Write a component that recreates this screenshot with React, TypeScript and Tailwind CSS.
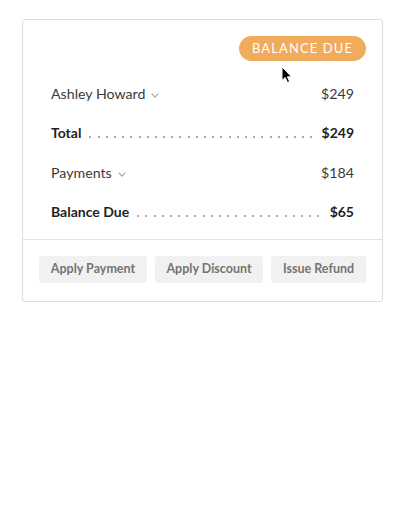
import React from "react";

const Chevron = () => (
  <svg width="8" height="5" viewBox="0 0 8 5" className="ml-[6px] mt-[2px]">
    <path d="M0.7 0.7 L4 4.1 L7.3 0.7" fill="none" stroke="#a0a0a0" strokeWidth="1.1" />
  </svg>
);

const Dots = () => (
  <div className="flex-1 ml-[8px] mr-[6px] self-end mb-[5px] h-[2px] overflow-hidden flex gap-[6.2px]">
    {Array.from({ length: 40 }).map((_, i) => (
      <div key={i} className="shrink-0 w-[2px] h-[2px] bg-[#aaaaaa]" />
    ))}
  </div>
);

export default function App() {
  return (
    <div className="w-[404px] h-[524px] bg-white relative" style={{ fontFamily: "Lato, 'Noto Sans', sans-serif" }}>
      <div className="absolute left-[22px] top-[19px] w-[361px] border border-[#dedede] rounded-[3px] bg-white">
        <div className="flex justify-end pt-[16px] pr-[16px]">
          <div className="h-[25px] px-[13px] rounded-full bg-[#f0ab5c] text-white text-[13px] tracking-[1.1px] flex items-center leading-none">
            BALANCE DUE
          </div>
        </div>
        <div className="px-[28px] pt-[23px] pb-[17px] text-[14px] leading-[20px]">
          <div className="flex items-center justify-between h-[20px] text-[#3a3a3a] text-[14.2px]">
            <div className="flex items-center">Ashley Howard<Chevron /></div>
            <div>$249</div>
          </div>
          <div className="flex items-center h-[20px] mt-[19px] font-bold text-[#1f1f1f]">
            <div>Total</div>
            <Dots />
            <div>$249</div>
          </div>
          <div className="flex items-center justify-between h-[20px] mt-[20px] text-[#3a3a3a] text-[14.2px]">
            <div className="flex items-center">Payments<Chevron /></div>
            <div>$184</div>
          </div>
          <div className="flex items-center h-[20px] mt-[19px] font-bold text-[#1f1f1f]">
            <div>Balance Due</div>
            <Dots />
            <div>$65</div>
          </div>
        </div>
        <div className="border-t border-[#e2e2e2] flex gap-[8px] pl-[16px] pr-[16px] pt-[16px] pb-[18px]">
          <button className="w-[108px] h-[27px] rounded-[3px] bg-[#f1f1f1] text-[#747474] text-[12.5px] font-bold">Apply Payment</button>
          <button className="w-[108px] h-[27px] rounded-[3px] bg-[#f1f1f1] text-[#747474] text-[12.5px] font-bold">Apply Discount</button>
          <button className="w-[95px] h-[27px] rounded-[3px] bg-[#f1f1f1] text-[#747474] text-[12.5px] font-bold">Issue Refund</button>
        </div>
      </div>
      <svg className="absolute left-[281px] top-[66px]" width="12" height="18" viewBox="0 0 12 18">
        <path d="M1 1 L1 14.5 L4.2 11.5 L6.5 16.5 L8.6 15.6 L6.4 10.8 L10.6 10.8 Z" fill="#000" stroke="#fff" strokeWidth="1" strokeLinejoin="round" />
      </svg>
    </div>
  );
}
